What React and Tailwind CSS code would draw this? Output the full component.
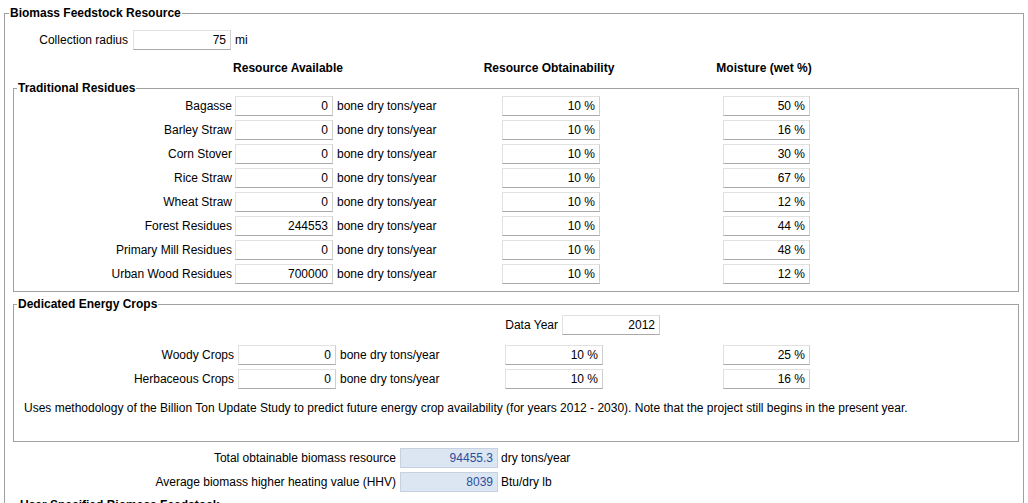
import React from "react";

const F = { fontFamily: '"Liberation Sans", Arial, sans-serif' };

function Box({ children, w = "w-[98px]", ml = "ml-[4px]", calc = false }) {
  return (
    <div
      className={`${w} ${ml} h-[20px] shrink-0 border text-right pr-[4px] leading-[18px] ${
        calc
          ? "bg-[#dce6f2] border-[#c7d2df] text-[#2b4f9c]"
          : "bg-white border-[#e1e1e1] border-r-[#cfcfcf] border-b-[#a9a9a9] text-black"
      }`}
    >
      {children}
    </div>
  );
}

const trad = [
  ["Bagasse", "0", "50"],
  ["Barley Straw", "0", "16"],
  ["Corn Stover", "0", "30"],
  ["Rice Straw", "0", "67"],
  ["Wheat Straw", "0", "12"],
  ["Forest Residues", "244553", "44"],
  ["Primary Mill Residues", "0", "48"],
  ["Urban Wood Residues", "700000", "12"],
];

export default function App() {
  return (
    <div
      style={F}
      className="w-[1028px] h-[503px] overflow-hidden bg-white text-[12px] leading-[16px] text-black"
    >
      <fieldset className="ml-[4px] mt-[5px] w-[1020px] border border-[#a0a0a0] pl-[8px] pr-[4px]">
        <legend className="ml-[-4px] px-[1px] font-bold leading-[16px]">
          Biomass Feedstock Resource
        </legend>

        {/* Collection radius */}
        <div className="flex items-center mt-[9px] h-[20px]">
          <div className="w-[115px] text-right shrink-0">Collection radius</div>
          <Box ml="ml-[5px]">75</Box>
          <div className="ml-[4px]">mi</div>
        </div>

        {/* headers */}
        <div className="flex mt-[10px] h-[16px] font-bold">
          <div className="ml-[200px] w-[150px] text-center shrink-0">Resource Available</div>
          <div className="ml-[96px] w-[180px] text-center shrink-0">Resource Obtainability</div>
          <div className="ml-[55px] w-[140px] text-center shrink-0">Moisture (wet %)</div>
        </div>

        {/* Traditional residues */}
        <fieldset className="mt-[4px] border border-[#a0a0a0] pb-[7px]">
          <legend className="ml-[3px] px-[1px] font-bold leading-[16px]">
            Traditional Residues
          </legend>
          <div className="flex flex-col gap-[4px]">
            {trad.map(([name, val, moist]) => (
              <div key={name} className="flex items-center h-[20px]">
                <div className="w-[218px] text-right shrink-0">{name}</div>
                <Box ml="ml-[3px]">{val}</Box>
                <div className="ml-[4px] w-[165px] shrink-0">bone dry tons/year</div>
                <Box ml="ml-0">10 %</Box>
                <Box w="w-[87px]" ml="ml-[123px]">{moist} %</Box>
              </div>
            ))}
          </div>
        </fieldset>

        {/* Dedicated energy crops */}
        <fieldset className="mt-[4px] border border-[#a0a0a0] pb-[25px]">
          <legend className="ml-[3px] px-[1px] font-bold leading-[16px]">
            Dedicated Energy Crops
          </legend>
          <div className="flex items-center mt-[3px] h-[20px]">
            <div className="w-[544px] text-right shrink-0">Data Year</div>
            <Box>2012</Box>
          </div>
          <div className="flex flex-col gap-[4px] mt-[10px]">
            {[
              ["Woody Crops", "25"],
              ["Herbaceous Crops", "16"],
            ].map(([name, moist]) => (
              <div key={name} className="flex items-center h-[20px]">
                <div className="w-[220px] text-right shrink-0">{name}</div>
                <Box>0</Box>
                <div className="ml-[4px] w-[165px] shrink-0">bone dry tons/year</div>
                <Box ml="ml-0">10 %</Box>
                <Box w="w-[87px]" ml="ml-[120px]">{moist} %</Box>
              </div>
            ))}
          </div>
          <div className="pl-[10px] mt-[11px] whitespace-nowrap">
            Uses methodology of the Billion Ton Update Study to predict future energy crop availability (for years 2012 - 2030). Note that the project still begins in the present year.
          </div>
        </fieldset>

        {/* totals */}
        <div className="flex flex-col gap-[4px] mt-[6px]">
          <div className="flex items-center h-[20px]">
            <div className="w-[383px] text-right shrink-0">Total obtainable biomass resource</div>
            <Box calc>94455.3</Box>
            <div className="ml-[3px]">dry tons/year</div>
          </div>
          <div className="flex items-center h-[20px]">
            <div className="w-[383px] text-right shrink-0">Average biomass higher heating value (HHV)</div>
            <Box calc>8039</Box>
            <div className="ml-[3px]">Btu/dry lb</div>
          </div>
        </div>

        <fieldset className="mt-[5px] border border-[#a0a0a0] h-[40px]">
          <legend className="ml-[5px] px-[1px] font-bold leading-[16px]">
            User Specified Biomass Feedstock
          </legend>
        </fieldset>
      </fieldset>
    </div>
  );
}
